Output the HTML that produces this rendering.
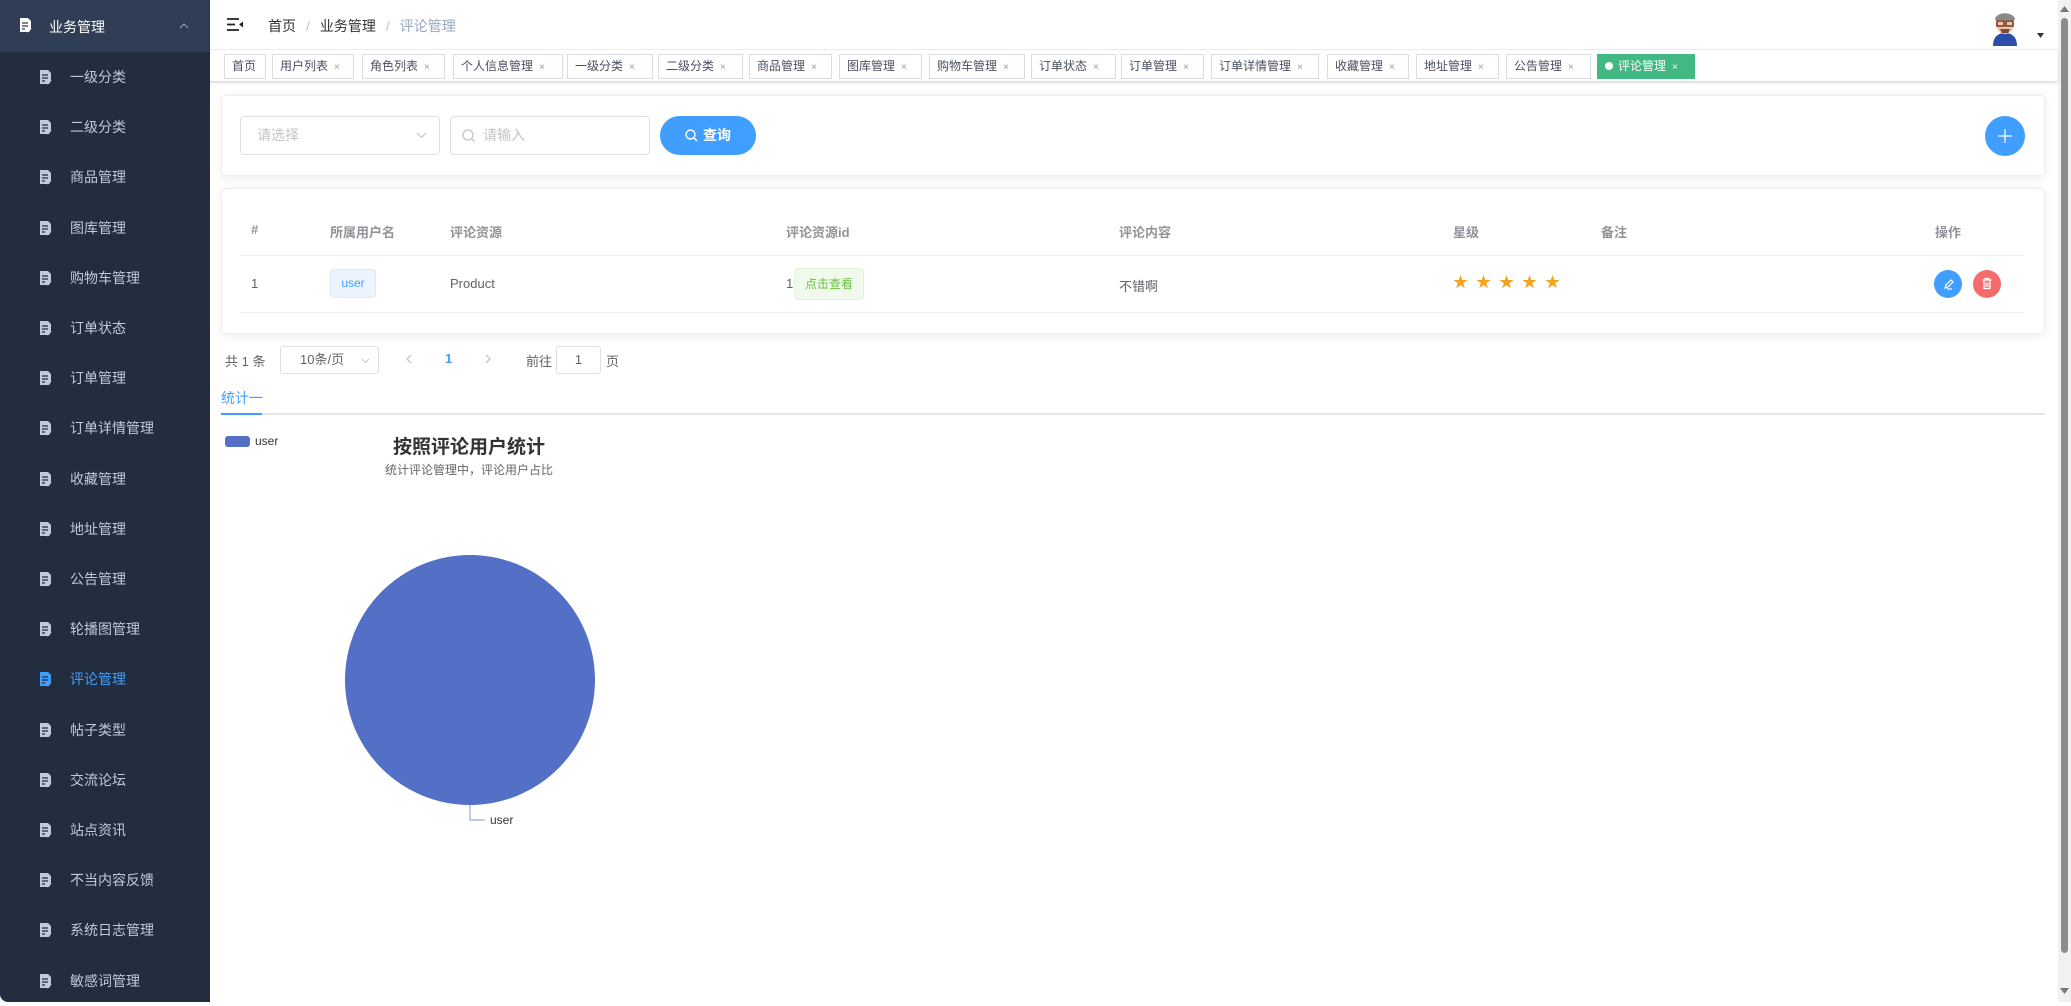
<!DOCTYPE html>
<html><head><meta charset="utf-8"><style>
*{box-sizing:border-box;margin:0;padding:0}
body{width:2071px;height:1002px;overflow:hidden;background:#fff;font-family:"Liberation Sans","Noto Sans CJK SC",sans-serif;position:relative;color:#606266}
.abs{position:absolute}
#side{left:0;top:0;width:210px;height:1002px;background:#222d3d;border-bottom-left-radius:8px}
#side .top{position:absolute;left:0;top:0;width:210px;height:52px;background:#2f3e54;color:#fff;font-size:14px}
.it{position:absolute;left:0;width:210px;height:50px;color:#bfcbd9;font-size:14px}
.it span{position:absolute;left:70px;top:50%;transform:translateY(-50%)}
.ic{position:absolute;width:13px;height:15px}
.tab{position:absolute;top:54px;height:25px;border:1px solid #d8dce5;background:#fff;font-size:12px;color:#495060;line-height:23px;padding-left:7px;white-space:nowrap}
.tab i{font-style:normal;color:#999;font-size:10px;margin-left:6px}
.card{position:absolute;left:221px;width:1824px;background:#fff;border:1px solid #ebeef5;border-radius:4px;box-shadow:0 2px 10px rgba(0,0,0,.08)}
.th{position:absolute;top:222px;font-size:13px;color:#909399;font-weight:bold}
.td{position:absolute;font-size:13px;color:#606266}
</style></head><body>
<div id="side" class="abs">
 <div class="top">
  <svg class="ic" style="left:19px;top:18px" viewBox="0 0 13 15"><path d="M1 0h8l3 3v8l-2 3H1z" fill="#fff"/><path d="M3 5h6M3 8h6M3 11h3" stroke="#2f3e54" stroke-width="1.3"/><path d="M8 14l4-4" stroke="#fff" stroke-width="1.5"/></svg>
  <span style="position:absolute;left:49px;top:17px">业务管理</span>
  <svg style="position:absolute;left:179px;top:22px" width="10" height="7" viewBox="0 0 10 7"><path d="M1 6l4-4 4 4" stroke="#8a97a8" fill="none" stroke-width="1.2"/></svg>
 </div>
</div>
<div id="items"></div>
<div class="abs" style="left:210px;top:0;width:1848px;height:50px;background:#fff;border-bottom:1px solid #eef0f3;box-shadow:0 1px 4px rgba(0,21,41,.06)"></div>
<svg class="abs" style="left:227px;top:18px" width="16" height="13" viewBox="0 0 16 13"><path d="M0 1h12M0 6.5h8M0 12h12" stroke="#222" stroke-width="1.8"/><path d="M16 3.5v6l-4-3z" fill="#222"/></svg>
<div class="abs" style="left:268px;top:16px;font-size:14px;color:#303133">首页<span style="color:#c0c4cc;margin:0 10px">/</span>业务管理<span style="color:#c0c4cc;margin:0 10px">/</span><span style="color:#97a8be">评论管理</span></div>
<svg class="abs" style="left:1990px;top:6px" width="30" height="40" viewBox="0 0 30 40"><path d="M3 40c0-9 5-13 12-13s12 4 12 13z" fill="#2d4ea8"/><ellipse cx="15" cy="18" rx="9" ry="10" fill="#f1c3a8"/><path d="M5 14c0-9 20-9 20 0z" fill="#8a8a8a"/><rect x="7" y="15" width="7" height="5" fill="none" stroke="#6b3b2a" stroke-width="1.5"/><rect x="16" y="15" width="7" height="5" fill="none" stroke="#6b3b2a" stroke-width="1.5"/><path d="M10 23h10l-2 4h-6z" fill="#7b4a3a"/></svg>
<svg class="abs" style="left:2037px;top:33px" width="7" height="5"><path d="M0 0h7l-3.5 5z" fill="#333"/></svg>
<div class="abs" style="left:2058px;top:0;width:13px;height:1002px;background:#f1f1f1"></div>
<div class="abs" style="left:2061px;top:18px;width:7px;height:935px;background:#8c8c8c;border-radius:4px"></div>
<svg class="abs" style="left:2060px;top:6px" width="9" height="6"><path d="M0 6h9L4.5 0z" fill="#777"/></svg>
<svg class="abs" style="left:2060px;top:988px" width="9" height="6"><path d="M0 0h9L4.5 6z" fill="#777"/></svg>
<div class="abs" style="left:210px;top:50px;width:1848px;height:32px;background:#fff;border-bottom:1px solid #d8dce5;box-shadow:0 1px 3px rgba(0,0,0,.12)"></div>
<div id="tabs"></div>
<div class="card" style="top:95px;height:81px"></div>
<div class="abs" style="left:240px;top:116px;width:200px;height:39px;border:1px solid #dcdfe6;border-radius:4px;font-size:14px;color:#c0c4cc;line-height:37px;padding-left:16px">请选择
 <svg style="position:absolute;right:12px;top:15px" width="11" height="7"><path d="M1 1l4.5 4.5L10 1" stroke="#c0c4cc" fill="none" stroke-width="1.2"/></svg></div>
<div class="abs" style="left:450px;top:116px;width:200px;height:39px;border:1px solid #dcdfe6;border-radius:4px;font-size:14px;color:#c0c4cc;line-height:37px;padding-left:32px">请输入
 <svg style="position:absolute;left:11px;top:12px" width="14" height="14"><circle cx="6" cy="6" r="5" stroke="#c0c4cc" fill="none" stroke-width="1.3"/><path d="M9.5 9.5l3 3" stroke="#c0c4cc" stroke-width="1.3"/></svg></div>
<div class="abs" style="left:660px;top:116px;width:96px;height:39px;border-radius:20px;background:#409eff;color:#fff;font-size:14px;font-weight:bold;line-height:39px;padding-left:25px">
 <svg style="position:absolute;left:25px;top:13px" width="13" height="13"><circle cx="5.5" cy="5.5" r="4.5" stroke="#fff" fill="none" stroke-width="1.4"/><path d="M9 9l3 3" stroke="#fff" stroke-width="1.4"/></svg><span style="margin-left:18px">查询</span></div>
<div class="abs" style="left:1985px;top:116px;width:40px;height:40px;border-radius:50%;background:#409eff"><svg width="40" height="40"><path d="M20 13v14M13 20h14" stroke="#fff" stroke-width="1.2"/></svg></div>
<div class="card" style="top:188px;height:146px"></div>
<div class="abs" style="left:240px;top:255px;width:1784px;height:1px;background:#ebeef5"></div>
<div class="abs" style="left:240px;top:312px;width:1784px;height:1px;background:#ebeef5"></div>
<div class="th" style="left:251px">#</div>
<div class="th" style="left:330px">所属用户名</div>
<div class="th" style="left:450px">评论资源</div>
<div class="th" style="left:786px">评论资源id</div>
<div class="th" style="left:1119px">评论内容</div>
<div class="th" style="left:1453px">星级</div>
<div class="th" style="left:1601px">备注</div>
<div class="th" style="left:1935px">操作</div>
<div class="td" style="left:251px;top:276px">1</div>
<div class="abs" style="left:330px;top:269px;width:46px;height:29px;background:#ecf5ff;border:1px solid #d9ecff;border-radius:4px;color:#409eff;font-size:12px;text-align:center;line-height:27px">user</div>
<div class="td" style="left:450px;top:276px">Product</div>
<div class="td" style="left:786px;top:276px">1</div>
<div class="abs" style="left:794px;top:268px;width:70px;height:32px;background:#f0f9eb;border:1px solid #e1f3d8;border-radius:4px;color:#67c23a;font-size:12px;text-align:center;line-height:30px">点击查看</div>
<div class="td" style="left:1119px;top:276px">不错啊</div>
<div class="abs" style="left:1453px;top:274px;font-size:15px;line-height:18px;color:#f7a21b;letter-spacing:8px">★★★★★</div>
<div class="abs" style="left:1934px;top:270px;width:28px;height:28px;border-radius:50%;background:#409eff"><svg width="28" height="28"><path d="M11 18l1-3 5-5 2 2-5 5z" stroke="#fff" fill="none" stroke-width="1.2"/><path d="M13 19h5" stroke="#fff" stroke-width="1.2"/></svg></div>
<div class="abs" style="left:1973px;top:270px;width:28px;height:28px;border-radius:50%;background:#f56c6c"><svg width="28" height="28"><path d="M9.5 10h9M12 10V8.5h4V10M11 10.5v8h6v-8M13 12.5v4.5M15 12.5v4.5" stroke="#fff" fill="none" stroke-width="1.2"/></svg></div>
<div class="abs" style="left:225px;top:351px;font-size:13px;color:#606266">共 1 条</div>
<div class="abs" style="left:280px;top:346px;width:99px;height:28px;border:1px solid #dcdfe6;border-radius:3px;font-size:13px;line-height:26px;padding-left:19px">10条/页<svg style="position:absolute;right:8px;top:11px" width="9" height="6"><path d="M1 1l3.5 3.5L8 1" stroke="#c0c4cc" fill="none"/></svg></div>
<svg class="abs" style="left:406px;top:354px" width="6" height="10"><path d="M5 1L1 5l4 4" stroke="#c0c4cc" fill="none" stroke-width="1.3"/></svg>
<div class="abs" style="left:445px;top:351px;font-size:13px;color:#409eff;font-weight:bold">1</div>
<svg class="abs" style="left:485px;top:354px" width="6" height="10"><path d="M1 1l4 4-4 4" stroke="#c0c4cc" fill="none" stroke-width="1.3"/></svg>
<div class="abs" style="left:526px;top:351px;font-size:13px">前往</div>
<div class="abs" style="left:556px;top:346px;width:45px;height:28px;border:1px solid #dcdfe6;border-radius:3px;font-size:13px;line-height:26px;text-align:center">1</div>
<div class="abs" style="left:606px;top:351px;font-size:13px">页</div>
<div class="abs" style="left:221px;top:388px;font-size:14px;color:#409eff">统计一</div>
<div class="abs" style="left:221px;top:413px;width:1824px;height:2px;background:#e4e7ed"></div>
<div class="abs" style="left:221px;top:413px;width:41px;height:2px;background:#409eff"></div>
<div class="abs" style="left:225px;top:436px;width:25px;height:11px;background:#5470c6;border-radius:3px"></div>
<div class="abs" style="left:255px;top:434px;font-size:12px;color:#333">user</div>
<div class="abs" style="left:369px;top:432px;width:200px;text-align:center;font-size:19px;font-weight:bold;color:#333">按照评论用户统计</div>
<div class="abs" style="left:349px;top:461px;width:240px;text-align:center;font-size:12px;color:#666">统计评论管理中，评论用户占比</div>
<svg class="abs" style="left:330px;top:540px" width="300" height="300"><circle cx="140" cy="140" r="125" fill="#5470c6"/><path d="M140 265v15h15" stroke="#5470c6" stroke-opacity=".6" fill="none" stroke-width="1.2"/><text x="160" y="284" font-size="12" fill="#333" font-family="Liberation Sans">user</text></svg>
<script>
var names=["一级分类","二级分类","商品管理","图库管理","购物车管理","订单状态","订单管理","订单详情管理","收藏管理","地址管理","公告管理","轮播图管理","评论管理","帖子类型","交流论坛","站点资讯","不当内容反馈","系统日志管理","敏感词管理"];
var h="";names.forEach(function(n,i){var c=n=="评论管理"?"#409eff":"#bfcbd9";var y=52+i*50.2;
h+='<div class="it" style="top:'+y+'px;color:'+c+'"><svg class="ic" style="left:39px;top:18px" viewBox="0 0 13 15"><path d="M1 0h8l3 3v8l-2 3H1z" fill="'+c+'"/><path d="M3 5h6M3 8h6M3 11h3" stroke="#222d3d" stroke-width="1.3"/><path d="M8 14l4-4" stroke="'+c+'" stroke-width="1.5"/></svg><span>'+n+'</span></div>';});
document.getElementById("items").innerHTML=h;
var t=[["首页",224,42],["用户列表",272,82],["角色列表",362,83],["个人信息管理",453,110],["一级分类",567,86],["二级分类",658,85],["商品管理",749,83],["图库管理",839,83],["购物车管理",929,96],["订单状态",1031,85],["订单管理",1121,83],["订单详情管理",1211,108],["收藏管理",1327,82],["地址管理",1416,83],["公告管理",1506,85],["评论管理",1597,98]];
var s="";t.forEach(function(a,i){var act=i==15;
s+='<div class="tab" style="left:'+a[1]+'px;width:'+a[2]+'px;'+(act?'background:#42b983;border-color:#42b983;color:#fff;':'')+'">'+(act?'<span style="display:inline-block;width:8px;height:8px;border-radius:50%;background:#fff;margin-right:5px"></span>':'')+a[0]+(i?'<i'+(act?' style="color:#fff"':'')+'>×</i>':'')+'</div>';});
document.getElementById("tabs").innerHTML=s;
</script>
</body></html>
